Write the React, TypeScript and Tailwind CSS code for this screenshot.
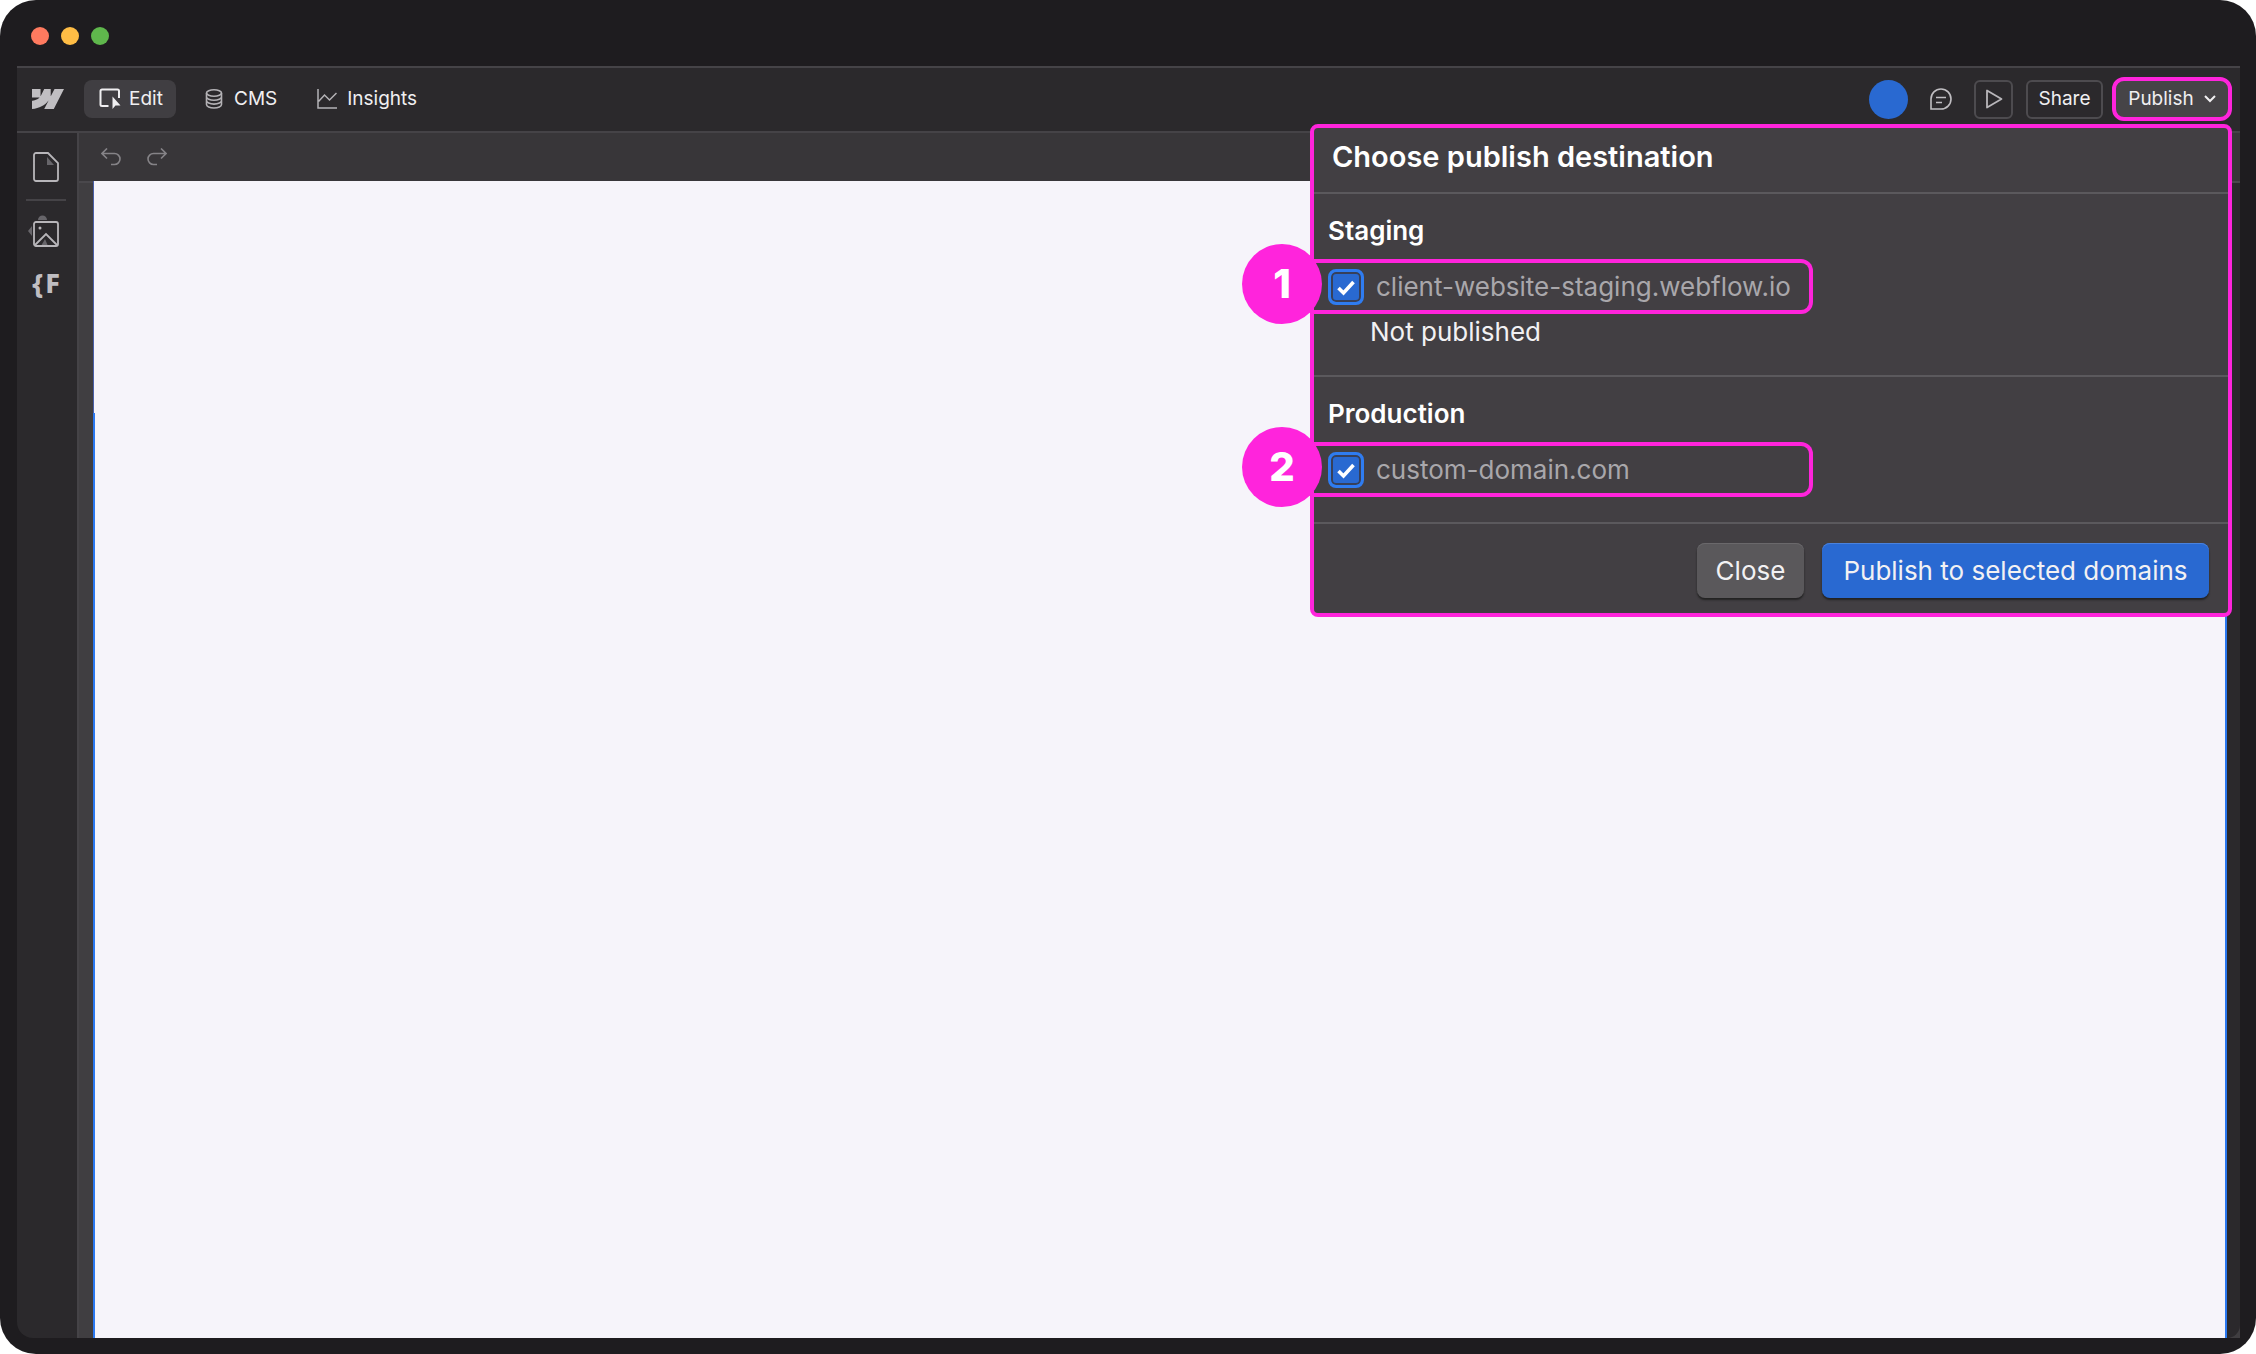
import type { ReactNode } from 'react';

interface DestinationProps {
  id: string;
  title: string;
  domain: string;
  step: number;
  children?: ReactNode;
}

function WebflowLogo() {
  return (
    <svg viewBox="0 0 1080 674" className="h-5 w-8" fill="#c0bec2" preserveAspectRatio="none" aria-hidden="true">
      <path d="M1080 0L735.386 673.684H411.695L555.916 394.481H549.445C430.463 548.934 252.942 650.61 0 673.684V398.344C0 398.344 161.813 388.787 256.939 288.776H0V0H288.771V237.515L295.252 237.489L413.254 0H631.644V236.009L638.126 235.999L760.555 0H1080Z" />
    </svg>
  );
}

function Destination({ id, title, domain, step, children }: DestinationProps) {
  return (
    <section className="h-[183px] pt-[21px] border-b-2 border-[#5b595d] last-of-type:h-[147px]">
      <h3 className="pl-3.5 text-[26px] leading-8 font-semibold">{title}</h3>
      <div className="relative mt-3 -ml-1 flex h-[55px] w-[503px] items-center rounded-r-xl border-4 border-l-0 border-[#ff24dc] pl-[18px]">
        <span className="absolute -top-[19px] -left-[68px] flex size-20 items-center justify-center rounded-full bg-[#ff24dc] text-[40px] font-extrabold">
          {step}
        </span>
        <span className="relative flex size-9">
          <input
            id={id}
            type="checkbox"
            defaultChecked
            className="size-9 appearance-none rounded-lg border-[3px] border-[#2f7cf0] bg-[#2969d1] shadow-[inset_0_0_0_2px_#37405a]"
          />
          <svg viewBox="0 0 36 36" className="pointer-events-none absolute inset-0 size-9" fill="none" stroke="white" strokeWidth="3.6" aria-hidden="true">
            <path d="M10.500 19l5 5 10-11" />
          </svg>
        </span>
        <label htmlFor={id} className="ml-3 text-[26px] leading-8 text-[#a9a7ab]">{domain}</label>
      </div>
      {children}
    </section>
  );
}

function PublishMenu() {
  return (
    <div className="absolute top-[47px] right-0 z-10 w-[922px] rounded-lg border-4 border-[#ff24dc] bg-[#423f43] text-white">
      <h2 className="h-[66px] border-b-2 border-[#5b595d] pt-[11px] pl-[18px] text-[29px] leading-9 font-semibold">
        Choose publish destination
      </h2>
      <Destination id="staging" title="Staging" domain="client-website-staging.webflow.io" step={1}>
        <p className="pt-0.5 pl-14 text-[26px] leading-8 text-[#f2f1f3]">Not published</p>
      </Destination>
      <Destination id="production" title="Production" domain="custom-domain.com" step={2} />
      <div className="flex h-[89px] justify-end gap-[18px] pt-[19px] pr-[19px] text-[26px] text-[#f2f1f3]">
        <button type="button" className="h-[55px] w-[107px] rounded-lg bg-[#5a585b] shadow-[0_2px_2px_#222,inset_0_1px_0_#6a686b]">
          Close
        </button>
        <button type="button" className="h-[55px] w-[387px] rounded-lg bg-[#2969d1] shadow-[0_2px_2px_#222,inset_0_1px_0_#4a82dd]">
          Publish to selected domains
        </button>
      </div>
    </div>
  );
}

function TopBar() {
  return (
    <header className="flex h-[67px] items-center border-y-2 border-[#454347] bg-[#2b292c] pr-2 pb-px pl-[15px] text-[19px] text-[#f0eff1]">
      <WebflowLogo />
      <nav className="ml-5 flex gap-1">
        <button type="button" className="flex h-[38px] w-[92px] items-center gap-2 rounded-lg bg-[#403e42] pl-[15px]">
          <svg viewBox="0 0 22 22" className="size-[22px]" fill="none" stroke="currentColor" strokeWidth="2" aria-hidden="true">
            <path d="M9.500 18H3a1.500 1.500 0 0 1-1.500-1.500V3A1.500 1.500 0 0 1 3 1.500h15.500A1.500 1.500 0 0 1 20 3v7" />
            <path d="M13.500 8.500v12.500l3-3.500h5z" fill="currentColor" stroke="none" />
          </svg>
          Edit
        </button>
        <button type="button" className="flex h-[38px] items-center gap-2.5 pr-5 pl-6">
          <svg viewBox="0 0 20 20" className="size-5" fill="none" stroke="#b4b2b6" strokeWidth="1.6" aria-hidden="true">
            <ellipse cx="10" cy="4" rx="7.500" ry="3.200" />
            <path d="M2.500 4v11.500c0 2 3.300 3.500 7.500 3.500s7.500-1.500 7.500-3.500V4M2.500 7.800c0 2 3.300 3.500 7.500 3.500s7.500-1.500 7.500-3.500M2.500 11.600c0 2 3.300 3.500 7.500 3.500s7.500-1.500 7.500-3.500" />
          </svg>
          CMS
        </button>
        <button type="button" className="flex h-[38px] items-center gap-2.5 px-4">
          <svg viewBox="0 0 20 20" className="size-5" fill="none" stroke="#b4b2b6" strokeWidth="1.5" aria-hidden="true">
            <path d="M1 0v19h19M1.500 12.500L7.500 6l5 5L19.500 4" />
          </svg>
          Insights
        </button>
      </nav>
      <div className="ml-auto flex items-center">
        <span className="size-[39px] rounded-full bg-[#2969d1]" />
        <button type="button" aria-label="Comments" className="mx-[22px]">
          <svg viewBox="0 0 22 22" className="size-[22px]" fill="none" stroke="#c0bec2" strokeWidth="1.6" aria-hidden="true">
            <path d="M1 21V11A10 10 0 1 1 11 21zM6 9.500h10M6 14.500h6" />
          </svg>
        </button>
        <button type="button" aria-label="Preview" className="flex size-[39px] items-center justify-center rounded-md border-2 border-[#4d4b4f]">
          <svg viewBox="0 0 18 20" className="h-5 w-[18px]" fill="none" stroke="#b8b6ba" strokeWidth="1.8" strokeLinejoin="round" aria-hidden="true">
            <path d="M2 1.500v17L16.500 10z" />
          </svg>
        </button>
        <button type="button" className="ml-[13px] h-[39px] w-[77px] rounded-md border-2 border-[#4d4b4f]">Share</button>
        <div className="relative ml-[9px]">
          <button type="button" className="flex h-11 w-[120px] items-center justify-center gap-2.5 rounded-xl border-4 border-[#ff24dc] bg-[#464447]">
            Publish
            <svg viewBox="0 0 12 8" className="h-2 w-3" fill="none" stroke="currentColor" strokeWidth="2" aria-hidden="true">
              <path d="M1 1l5 5 5-5" />
            </svg>
          </button>
          <PublishMenu />
        </div>
      </div>
    </header>
  );
}

function Sidebar() {
  return (
    <aside className="flex w-[62px] flex-col items-center rounded-bl-2xl border-r-2 border-[#454347] bg-[#2b292c] pr-0.5">
      <button type="button" aria-label="Pages" className="mt-[19px]">
        <svg viewBox="0 0 26 30" className="h-[30px] w-[26px]" fill="none" stroke="#b8b6ba" strokeWidth="1.8" aria-hidden="true">
          <path d="M3 1h12l10 10v16a2 2 0 0 1-2 2H3a2 2 0 0 1-2-2V3a2 2 0 0 1 2-2z" />
          <path d="M14 5v8h7z" fill="#67656a" stroke="none" />
        </svg>
      </button>
      <span className="mt-[17px] h-0.5 w-10 bg-[#454347]" />
      <button type="button" aria-label="Assets" className="mt-3.5 mr-1.5">
        <svg viewBox="0 0 32 32" className="size-8" fill="none" stroke="#b8b6ba" strokeWidth="1.8" aria-hidden="true">
          <path d="M11 5a4.500 4.500 0 0 1 9 0zM5 11v10L1 16z" fill="#67656a" stroke="none" />
          <path d="M14 31l4-7 3 7z" fill="#67656a" stroke="none" />
          <rect x="7" y="7" width="24" height="24" rx="2" />
          <path d="M8 30l11-11 11 11" />
          <circle cx="13" cy="13" r="1.500" fill="#b8b6ba" stroke="none" />
        </svg>
      </button>
      <button type="button" className="mt-[18px] flex gap-0.5 font-['Noto_Sans','Inter',sans-serif] text-[27px] leading-9 font-extrabold text-[#c0bec2]">
        <span>{'{'}</span>
        <span>F</span>
      </button>
    </aside>
  );
}

export default function App() {
  return (
    <div className="flex min-h-screen flex-col rounded-[36px] bg-[#1e1c1f] pr-4 pb-4 pl-[17px] font-['Inter','Liberation_Sans',sans-serif]">
      <div className="flex h-[66px] items-center gap-3 pt-1.5 pl-3.5">
        <span className="size-[18px] rounded-full bg-[#ff7a5f]" />
        <span className="size-[18px] rounded-full bg-[#ffbd45]" />
        <span className="size-[18px] rounded-full bg-[#5fb74c]" />
      </div>
      <TopBar />
      <div className="flex grow">
        <Sidebar />
        <main className="flex grow flex-col bg-[#403e41]">
          <div className="flex h-12 items-center gap-[26px] bg-[#383639] pl-[22px] text-[#858387]">
            <button type="button" aria-label="Undo">
              <svg viewBox="0 0 20 18" className="h-[18px] w-5" fill="none" stroke="currentColor" strokeWidth="1.6" aria-hidden="true">
                <path d="M6 0.500L1 5.500l5 5M1 5.500h12.500a5.500 5.500 0 0 1 0 11H10" />
              </svg>
            </button>
            <button type="button" aria-label="Redo">
              <svg viewBox="0 0 20 18" className="h-[18px] w-5" fill="none" stroke="currentColor" strokeWidth="1.6" aria-hidden="true">
                <path d="M14 0.500l5 5-5 5M19 5.500H6.500a5.500 5.500 0 0 0 0 11H10" />
              </svg>
            </button>
          </div>
          <div className="flex grow">
            <div className="w-[14px] border-t-2 border-[#4a484c]" />
            <div className="flex w-0.5 flex-col bg-[#2b78f0]">
              <div className="h-58 border-l border-[#4a5fa8] bg-[#f6f4fa]" />
            </div>
            <div className="grow border-r-2 border-[#2b78f0] bg-[#f6f4fa]" />
            <div className="w-[13px] rounded-br-2xl border-t-2 border-[#4a484c] bg-[#2b292c]" />
          </div>
        </main>
      </div>
    </div>
  );
}
